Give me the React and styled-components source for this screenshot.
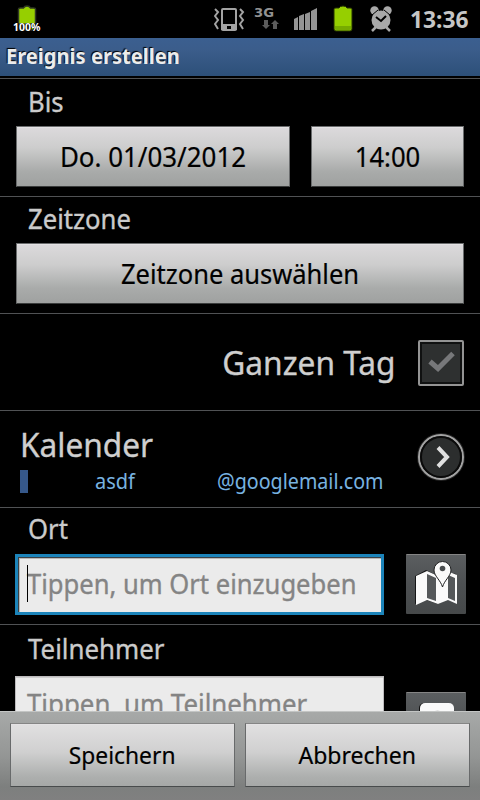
import React from "react";
import styled, { createGlobalStyle } from "styled-components";

const GlobalStyle = createGlobalStyle`
  * {
    box-sizing: border-box;
  }

  body {
    margin: 0;
    background: #000;
    font-family: "Noto Sans", "Open Sans", sans-serif;
  }
`;

const Screen = styled.div`
  width: 480px;
  height: 800px;
  display: flex;
  flex-direction: column;
  overflow: hidden;
  background: #000;
`;

const StatusBar = styled.div`
  height: 38px;
  flex: none;
  display: flex;
  justify-content: space-between;
`;

const StatusIcons = styled.svg`
  display: block;
`;

const NetworkType = styled.text`
  font-family: "DejaVu Sans", sans-serif;
  font-size: 13px;
  font-weight: 700;
  fill: #929292;
`;

const Battery = styled.div`
  position: relative;
  width: 60px;
`;

const Percent = styled.span`
  position: absolute;
  left: 13px;
  top: 20px;
  font-size: 11px;
  font-weight: 700;
  line-height: 14px;
  color: #fff;
  text-shadow: 1px 0 #000, -1px 0 #000;
  transform: scaleX(0.95);
  transform-origin: left;
`;

const StatusRight = styled.div`
  display: flex;
`;

const Clock = styled.span`
  width: 71px;
  padding-left: 1px;
  font-size: 23px;
  font-weight: 700;
  line-height: 38px;
  color: #c6c6c6;
  white-space: nowrap;
`;

const TitleBar = styled.h1`
  flex: none;
  height: 38px;
  margin: 0 0 2px;
  padding-left: 6px;
  background: linear-gradient(#3b5f90, #3b5d8b 30%, #2d5079);
  font-size: 21px;
  line-height: 36px;
  color: #ececec;
  text-shadow: -1px -1px 1px #000;
`;

const Text = styled.span`
  display: inline-block;
  white-space: nowrap;
  transform: scaleX(${(p) => p.$fit || 0.95});
  transform-origin: ${(p) => p.$origin || "center"};
`;

const Form = styled.div`
  flex: 1;
  min-height: 0;
  overflow: hidden;
  -webkit-text-stroke: 0.35px;
`;

const Section = styled.section`
  height: ${(p) => p.$height}px;
  padding: ${(p) => p.$top || 0}px 16px 0;
  border-top: 1px solid #505254;
`;

const Label = styled.div`
  height: ${(p) => p.$height}px;
  padding-left: 12px;
  font-size: 27px;
  line-height: 36px;
  color: #cbcbcb;
`;

const Row = styled.div`
  display: flex;
  justify-content: space-between;
`;

const Button = styled.button`
  width: ${(p) => p.$width}px;
  height: 61px;
  padding: 0 0 1px;
  border: 1px solid #6a6c6d;
  border-bottom-color: #3a3c3c;
  background: linear-gradient(#dcdadc, #cdcdcd 35%, #a9abaa 75%, #9fa1a0);
  box-shadow: inset 0 1px #e4e2e4;
  font-family: inherit;
  font-size: 27px;
  color: #000;
  -webkit-text-stroke: 0.2px;
`;

const CheckRow = styled(Section)`
  display: flex;
  align-items: center;
  justify-content: flex-end;
  gap: 22px;
  font-size: 33px;
  color: #cfcfcf;
`;

const Checkbox = styled.span`
  display: flex;
  align-items: center;
  justify-content: center;
  width: 46px;
  height: 46px;
  margin-top: 1px;
  border: 2px solid #949494;
  border-radius: 2px;
  background: #2e3030;
  box-shadow: inset 0 0 0 2px #101111;
`;

const CalendarRow = styled(Section)`
  display: flex;
  justify-content: space-between;
  padding: 0 14px 0 20px;
`;

const CalendarName = styled.div`
  padding-top: 12px;
  font-size: 33px;
  line-height: 44px;
  color: #cfcfcf;
`;

const Account = styled.div`
  display: flex;
  align-items: center;
  height: 28px;
  font-size: 21px;
  line-height: 28px;
  color: #78b3e0;
  -webkit-text-stroke: 0;
`;

const ColorChip = styled.span`
  width: 8px;
  height: 23px;
  margin-right: 67px;
  background: #36588a;
`;

const AccountName = styled.span`
  width: 122px;
`;

const ArrowIcon = styled.svg`
  margin-top: 21px;
`;

const Field = styled.div`
  position: relative;
  width: 369px;
  height: 61px;
  margin-left: -1px;
  padding: 0 0 0 ${(p) => (p.$focused ? 9 : 11)}px;
  border: ${(p) => (p.$focused ? "3px solid #1c84ba" : "1px solid #bdbbbd")};
  background: #ebebeb;
  box-shadow: ${(p) =>
    p.$focused ? "inset 1px 1px #3d4144, inset 2px 2px #b8b8b8" : "inset 0 1px #cfcfcf"};
  font-size: 27px;
  line-height: ${(p) => (p.$focused ? 54 : 53)}px;
  color: #848484;
`;

const Caret = styled.i`
  position: absolute;
  left: 9px;
  top: 8px;
  width: 1px;
  height: 37px;
  background: #000;
`;

const IconButton = styled.button`
  width: 60px;
  height: 60px;
  margin: ${(p) => p.$offset || 0}px -2px 0 0;
  padding: 0;
  border: 0;
  border-top: 1px solid #858585;
  border-radius: 1px;
  background: linear-gradient(#5b5e60, #4d5052 50%, #46494a);

  svg {
    display: block;
  }
`;

const Footer = styled.footer`
  flex: none;
  display: flex;
  justify-content: space-between;
  height: 89px;
  padding: 11px 10px 0;
  border-top: 1px solid #c3c5c4;
  background: linear-gradient(#a7a9a8, #949695 50%, #7d7f7e 85%, #808080);
`;

const FooterButton = styled(Button)`
  height: 64px;
  border-color: #858585 #686a6b #484b4c;
  background: linear-gradient(#e1e0e1, #d0d0d0 45%, #adafae 85%, #a6a8a7);
  font-size: 24px;
`;

const StatusSymbols = () => (
  <StatusIcons width="195" height="38" viewBox="215 0 195 38">
    <g fill="none" stroke="#a3a3a3" strokeWidth="2">
      <path d="M216 9l3 3-3 4 3 4-3 4 3 5M241 9l3 3-3 4 3 4-3 4 3 5" />
      <rect x="223" y="9" width="14" height="21" rx="1" />
    </g>
    <path fill="#a3a3a3" d="M222 24h16v6h-16z" />
    <path d="M228 26h4v3h-4z" />
    <NetworkType x="255" y="17" textLength="20" lengthAdjust="spacingAndGlyphs">
      3G
    </NetworkType>
    <path fill="#5c5c5c" d="M265 20h4v5h2l-4 4-4-4h2zM276 20l4 4h-2v5h-4v-5h-2z" />
    <g fill="#949494">
      <path d="M295 19l4-2v13h-4zM300 16l5-2v16h-5zM306 14l5-2v18h-5zM312 11l6-3v22h-6z" />
    </g>
    <path
      fill="#96cf00"
      stroke="#253300"
      d="M335 9q0-1 2-1h3q1-2 4-2t4 2h3q2 0 2 1v20q0 2-2 2h-14q-2 0-2-2z"
    />
    <path fill="#679800" d="M336 26l16 0v3q0 1-2 1h-12q-2 0-2-1z" opacity=".65" />
    <g fill="#a9a9a9">
      <circle cx="382" cy="20" r="9.5" />
      <circle cx="375.500" cy="10.500" r="4.200" />
      <circle cx="388.500" cy="10.500" r="4.200" />
    </g>
    <path stroke="#000" d="M373 15l6-5M391 15l-6-5" />
    <path stroke="#a9a9a9" strokeWidth="2.5" d="M377 27l-4 4M387 27l4 4" />
    <path fill="none" stroke="#000" strokeWidth="2" d="M377 17l5 4 5-5" />
  </StatusIcons>
);

const MapIcon = () => (
  <svg width="60" height="59" viewBox="406 555 60 59">
    <path fill="#161718" d="M415 576l11-6 12 6 10-4 8 2v29l-8-4-10 5-12-4-11 4z" />
    <path
      fill="#fafafa"
      d="M416 576l11-5 11 5 9-5 10 4v29l-9-4-10 4-11-4-11 5z"
    />
    <path fill="#55585a" d="M427 574l9 4v23l-9-3zM448 575l7 3v23l-7-3z" />
    <path
      fill="#fafafa"
      stroke="#202122"
      strokeWidth="1"
      d="M442.500 587c-2-7-8.500-11-8.500-17a8.500 8.500 0 0 1 17 0c0 6-6.500 10-8.500 17z"
    />
    <circle cx="442.500" cy="568.500" r="2.800" fill="#4a4d4f" />
  </svg>
);

const ContactIcon = () => (
  <svg width="60" height="59" viewBox="0 0 60 59">
    <rect x="13" y="10" width="34" height="38" rx="5" fill="#111" />
    <rect x="14" y="10" width="34" height="38" rx="5" fill="#fafafa" />
    <circle cx="31.500" cy="24.500" r="7" fill="#c4c4c4" />
  </svg>
);

export default function App() {
  return (
    <Screen>
      <GlobalStyle />
      <StatusBar>
        <Battery>
          <StatusIcons width="60" height="38" viewBox="0 0 60 38">
            <path
              fill="#96cf00"
              stroke="#303824"
              strokeWidth="1.500"
              d="M18.500 9q0-1 2-1h3q1-2 3.500-2t3.500 2h3q2 0 2 1v20q0 1-2 1h-13q-2 0-2-1z"
            />
          </StatusIcons>
          <Percent>100%</Percent>
        </Battery>
        <StatusRight>
          <StatusSymbols />
          <Clock>
            <Text $origin="left" $fit={0.99}>13:36</Text>
          </Clock>
        </StatusRight>
      </StatusBar>
      <TitleBar>
        <Text $origin="left" $fit={0.957}>Ereignis erstellen</Text>
      </TitleBar>

      <Form>
        <Section $height={118} $top={5}>
          <Label $height={42}>
            <Text $origin="left">Bis</Text>
          </Label>
          <Row>
            <Button $width={274}>
              <Text $fit={0.96}>Do. 01/03/2012</Text>
            </Button>
            <Button $width={153}>
              <Text>14:00</Text>
            </Button>
          </Row>
        </Section>
        <Section $height={117} $top={4}>
          <Label $height={42}>
            <Text $origin="left">Zeitzone</Text>
          </Label>
          <Button $width={448}>
            <Text $fit={0.945}>Zeitzone auswählen</Text>
          </Button>
        </Section>
        <CheckRow $height={97}>
          <Text $origin="right" $fit={0.96}>Ganzen Tag</Text>
          <Checkbox>
            <svg width="38" height="38" viewBox="0 0 38 38">
              <path
                d="M8 17.500l8 7 15-15"
                fill="none"
                stroke="#77787a"
                strokeWidth="5"
              />
            </svg>
          </Checkbox>
        </CheckRow>
        <CalendarRow $height={97}>
          <div>
            <CalendarName>
              <Text $origin="left" $fit={0.958}>Kalender</Text>
            </CalendarName>
            <Account>
              <ColorChip />
              <AccountName>
                <Text $origin="left">asdf</Text>
              </AccountName>
              <Text $origin="left" $fit={0.937}>@googlemail.com</Text>
            </Account>
          </div>
          <ArrowIcon width="50" height="50" viewBox="0 0 50 50">
            <circle cx="25" cy="25" r="24" fill="#222" />
            <circle cx="25" cy="25" r="22" fill="#2c2e2e" stroke="#a3a3a3" strokeWidth="2" />
            <circle cx="25" cy="25" r="20" fill="none" stroke="#0a0a0a" strokeWidth="2" />
            <path d="M22 15.500l9 9.500-9 9.500" fill="none" stroke="#e0e0e0" strokeWidth="4" />
          </ArrowIcon>
        </CalendarRow>
        <Section $height={117} $top={3}>
          <Label $height={43}>
            <Text $origin="left">Ort</Text>
          </Label>
          <Row>
            <Field $focused>
              <Text $origin="left" $fit={0.947}>Tippen, um Ort einzugeben</Text>
              <Caret />
            </Field>
            <IconButton>
              <MapIcon />
            </IconButton>
          </Row>
        </Section>
        <Section $height={150} $top={6}>
          <Label $height={45}>
            <Text $origin="left" $fit={0.957}>Teilnehmer</Text>
          </Label>
          <Row>
            <Field>
              <Text $origin="left" $fit={0.957}>Tippen, um Teilnehmer</Text>
            </Field>
            <IconButton $offset={16}>
              <ContactIcon />
            </IconButton>
          </Row>
        </Section>
      </Form>

      <Footer>
        <FooterButton $width={225}>
          <Text>Speichern</Text>
        </FooterButton>
        <FooterButton $width={225}>
          <Text $fit={0.96}>Abbrechen</Text>
        </FooterButton>
      </Footer>
    </Screen>
  );
}
